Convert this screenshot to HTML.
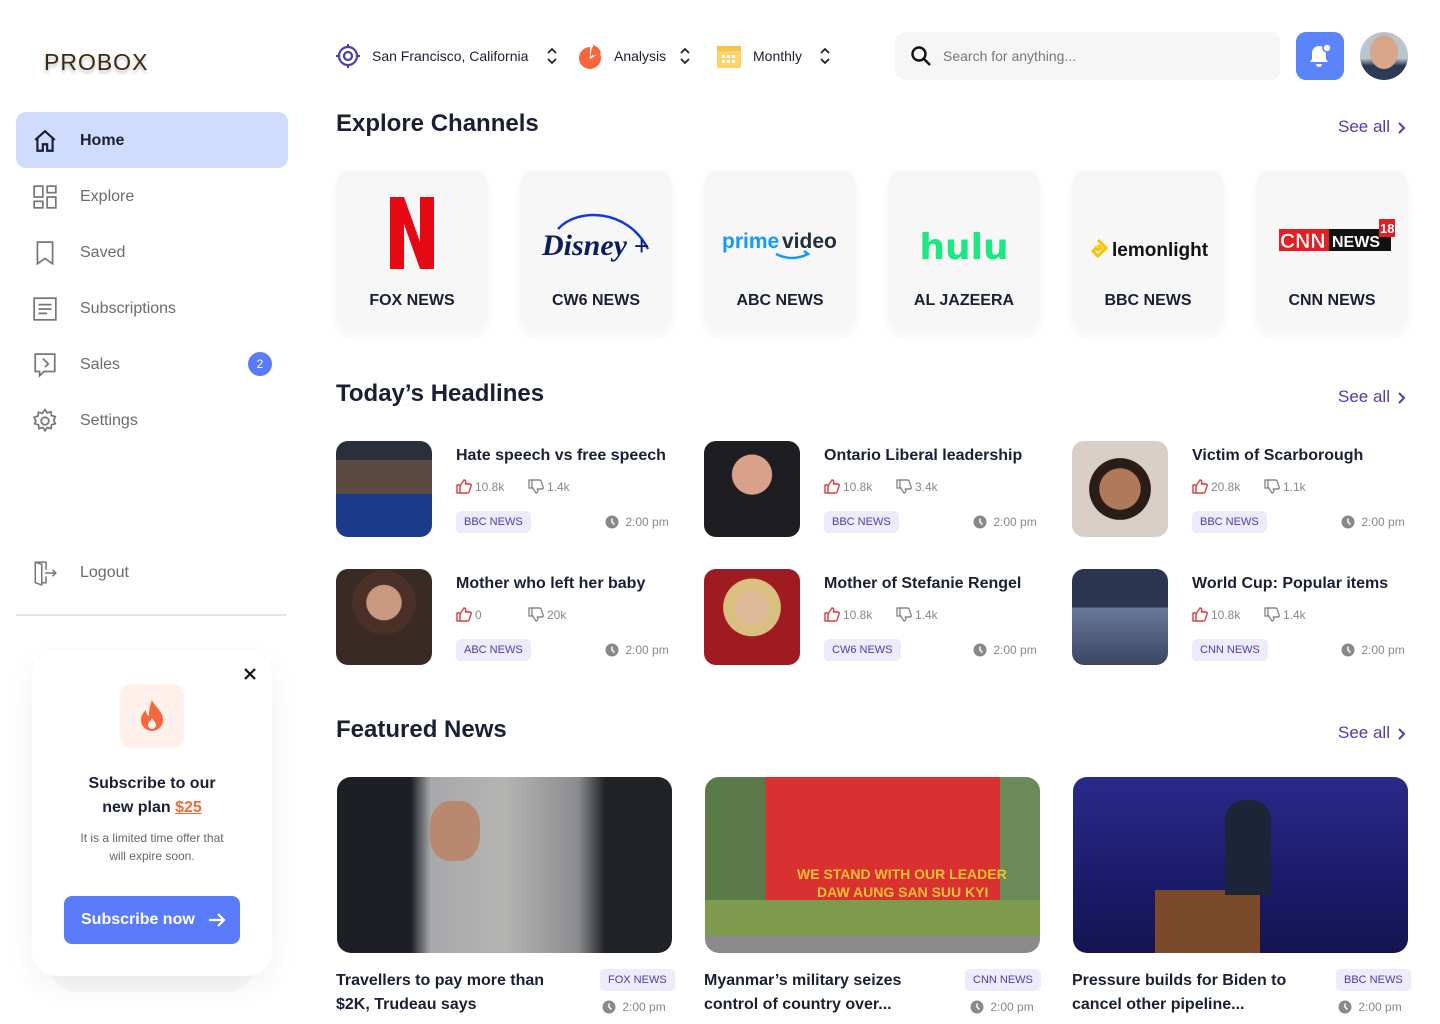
<!DOCTYPE html>
<html><head><meta charset="utf-8"><style>
*{box-sizing:border-box;margin:0;padding:0}
body{width:1440px;height:1024px;overflow:hidden;background:#fff;font-family:"Liberation Sans",sans-serif;color:#1b1f33;position:relative}
.abs{position:absolute}
.logo{left:44px;top:49px;font-size:23px;letter-spacing:1px;color:#3b2a12;text-shadow:0 3px 3px rgba(0,0,0,.25)}
.nav{left:16px;width:272px;height:56px;border-radius:10px;display:flex;align-items:center;padding-left:64px;font-size:16px;color:#6b6b6b;padding-top:2px}
.nav svg{position:absolute;left:16px;top:16px}
.nav.active{background:#cfdcfc;color:#1b1f33;font-weight:bold}
.badge{position:absolute;right:16px;top:16px;width:24px;height:24px;border-radius:50%;background:#5b7cfa;color:#fff;font-size:12px;text-align:center;line-height:24px}
.h2{font-size:24px;font-weight:bold;left:336px}
.see{left:1338px;font-size:17px;color:#4b3fa8}
.see svg{position:absolute;left:58px;top:4px}
.card{top:170px;width:152px;height:160px;border-radius:14px;background:#f7f7f7;box-shadow:0 6px 16px rgba(0,0,0,.04)}
.card .lbl{position:absolute;bottom:20px;width:100%;text-align:center;font-weight:bold;font-size:16px;color:#1b1f33}
.card .lg{position:absolute;top:28px;height:70px;width:100%;display:flex;align-items:center;justify-content:center}
.thumb{width:96px;height:96px;border-radius:12px}
.ht{font-size:16px;font-weight:bold;color:#1b1f33}
.st{font-size:12px;color:#888;display:flex;align-items:center;gap:3px}
.tag{background:#eeebfa;color:#4b3fa8;font-size:11px;padding:5px 8px;border-radius:5px}
.feat{top:777px;width:335px;height:176px;border-radius:14px}
.ft{font-size:16px;font-weight:bold;line-height:24px;top:969px;width:240px}
.ud{position:absolute}
</style></head><body>
<div class="abs logo">PROBOX</div>

<div class="abs nav active" style="top:112px"><svg width="26" height="26" viewBox="0 0 24 24" fill="none" stroke="#1b1f33" stroke-width="2"><path d="M3 11 12 3l9 8M5 9v12h5v-6h4v6h5V9"/></svg>Home</div>
<div class="abs nav" style="top:168px"><svg width="26" height="26" viewBox="0 0 24 24" fill="none" stroke="#777" stroke-width="1.6"><rect x="2" y="2" width="8" height="10"/><rect x="14" y="2" width="8" height="6"/><rect x="2" y="16" width="8" height="6"/><rect x="14" y="12" width="8" height="10"/></svg>Explore</div>
<div class="abs nav" style="top:224px"><svg width="26" height="26" viewBox="0 0 24 24" fill="none" stroke="#777" stroke-width="1.6"><path d="M5 2h14v20l-7-5-7 5z"/></svg>Saved</div>
<div class="abs nav" style="top:280px"><svg width="26" height="26" viewBox="0 0 24 24" fill="none" stroke="#777" stroke-width="1.6"><rect x="2" y="2" width="20" height="20"/><path d="M6 8h12M6 12h12M6 16h8"/></svg>Subscriptions</div>
<div class="abs nav" style="top:336px"><svg width="26" height="26" viewBox="0 0 24 24" fill="none" stroke="#777" stroke-width="1.6"><path d="M3 2h18v16H11l-4 4v-4H3z"/><path d="M10 6l5 5-3 3"/></svg>Sales<span class="badge">2</span></div>
<div class="abs nav" style="top:392px"><svg width="26" height="26" viewBox="0 0 24 24" fill="none" stroke="#777" stroke-width="1.6"><circle cx="12" cy="12" r="3.5"/><path d="M12 1.5l2 3 3.5-1 .5 3.5 3.5 1-1.5 3.3 1.5 3.2-3.5 1-.5 3.5-3.5-1-2 3-2-3-3.5 1-.5-3.5-3.5-1L3.5 12 2 8.5l3.5-1L6 4l3.5 1z"/></svg>Settings</div>
<div class="abs nav" style="top:544px"><svg width="26" height="26" viewBox="0 0 24 24" fill="none" stroke="#777" stroke-width="1.4"><path d="M3 2v19l6 2V4zM3 2h10v7M13 15v6H9M12 12h10M19 9l3 3-3 3"/></svg>Logout</div>
<div class="abs" style="left:16px;top:614px;width:271px;height:2px;background:#e6e6e6"></div>

<div class="abs" style="left:48px;top:680px;width:208px;height:312px;border-radius:30px;background:#f7f7f7"></div>
<div class="abs" style="left:32px;top:652px;width:240px;height:324px;border-radius:24px;background:#fff;box-shadow:0 8px 30px rgba(0,0,0,.06)"></div>
<svg class="abs" style="left:243px;top:667px" width="14" height="14" viewBox="0 0 14 14" stroke="#111" stroke-width="2.2"><path d="M2 2l10 10M12 2 2 12"/></svg>
<div class="abs" style="left:120px;top:684px;width:64px;height:64px;border-radius:10px;background:#fef0eb"><svg style="position:absolute;left:19px;top:15px" width="26" height="34" viewBox="0 0 26 34"><path d="M13 1c2 6 11 11 11 20a11 11 0 0 1-22 0c0-5 3-8 5-10 0 3 1 5 3 6 0-6 1-11 3-16z" fill="#f4683c"/><path d="M13 30a4 4 0 0 1-4-4c0-3 3-4 4-7 2 3 4 5 4 7a4 4 0 0 1-4 4z" fill="#fef0eb"/></svg></div>
<div class="abs" style="left:32px;width:240px;top:772px;text-align:center;font-weight:bold;font-size:16px;line-height:24px">Subscribe to our<br>new plan <span style="color:#f4683c;text-decoration:underline">$25</span></div>
<div class="abs" style="left:32px;width:240px;top:829px;text-align:center;font-size:12px;line-height:18px;color:#666">It is a limited time offer that<br>will expire soon.</div>
<div class="abs" style="left:64px;top:896px;width:176px;height:48px;border-radius:8px;background:#5b7cfa;color:#fff;font-weight:bold;font-size:16px;line-height:48px;padding-left:17px">Subscribe now <svg style="position:absolute;right:14px;top:16px" width="18" height="16" viewBox="0 0 18 16" fill="none" stroke="#fff" stroke-width="2.2"><path d="M1 8h15M10 2l6 6-6 6"/></svg></div>

<!-- top bar -->
<svg class="abs" style="left:336px;top:44px" width="24" height="24" viewBox="0 0 24 24" fill="none" stroke="#4b3fa8" stroke-width="2.2"><circle cx="12" cy="12" r="9"/><circle cx="12" cy="12" r="4"/><path d="M12 0v3M12 21v3M0 12h3M21 12h3"/></svg>
<div class="abs" style="left:372px;top:48px;font-size:14px">San Francisco, California</div>
<svg class="abs" style="left:546px;top:47px" width="12" height="18" viewBox="0 0 12 18" fill="none" stroke="#222" stroke-width="1.8"><path d="M2 6l4-4 4 4M2 12l4 4 4-4"/></svg>
<svg class="abs" style="left:578px;top:44px" width="26" height="26" viewBox="0 0 26 26"><circle cx="12" cy="14" r="11" fill="#f4683c"/><path d="M12 14 12 3 14 3z" fill="#fff"/><path d="M12 14l9-6" stroke="#fff" stroke-width="2"/><path d="M15 1a11 11 0 0 1 8 8l-8 3z" fill="#f4683c"/></svg>
<div class="abs" style="left:614px;top:48px;font-size:14px">Analysis</div>
<svg class="abs" style="left:679px;top:47px" width="12" height="18" viewBox="0 0 12 18" fill="none" stroke="#222" stroke-width="1.8"><path d="M2 6l4-4 4 4M2 12l4 4 4-4"/></svg>
<svg class="abs" style="left:716px;top:43px" width="26" height="26" viewBox="0 0 26 26"><rect x="1" y="3" width="24" height="22" rx="2" fill="#fcd46a"/><rect x="1" y="3" width="24" height="5" fill="#f7c34a"/><g fill="#fff"><rect x="6" y="12" width="3" height="3"/><rect x="11" y="12" width="3" height="3"/><rect x="16" y="12" width="3" height="3"/><rect x="6" y="17" width="3" height="3"/><rect x="11" y="17" width="3" height="3"/><rect x="16" y="17" width="3" height="3"/></g></svg>
<div class="abs" style="left:753px;top:48px;font-size:14px">Monthly</div>
<svg class="abs" style="left:819px;top:47px" width="12" height="18" viewBox="0 0 12 18" fill="none" stroke="#222" stroke-width="1.8"><path d="M2 6l4-4 4 4M2 12l4 4 4-4"/></svg>

<div class="abs" style="left:895px;top:32px;width:385px;height:48px;border-radius:10px;background:#f6f6f6"></div>
<svg class="abs" style="left:909px;top:44px" width="24" height="24" viewBox="0 0 24 24" fill="none" stroke="#111" stroke-width="2.4"><circle cx="10" cy="10" r="6.5"/><path d="M15 15l6 6"/></svg>
<div class="abs" style="left:943px;top:48px;font-size:14px;color:#777">Search for anything...</div>
<div class="abs" style="left:1296px;top:32px;width:48px;height:48px;border-radius:10px;background:#5b84fb"></div>
<svg class="abs" style="left:1306px;top:42px" width="28" height="28" viewBox="0 0 28 28" fill="#fff"><path d="M13 4a7 7 0 0 0-7 7v6l-2 3h18l-2-3v-6a7 7 0 0 0-7-7z"/><path d="M10 22a3 3 0 0 0 6 0z"/><circle cx="21" cy="6" r="4" stroke="#5b84fb" stroke-width="1.5"/></svg>
<div class="abs" style="left:1360px;top:32px;width:48px;height:48px;border-radius:50%;background:radial-gradient(ellipse 30% 36% at 50% 42%,#d9a588 0 95%,transparent 100%),linear-gradient(180deg,#b9c4cc 0 55%,#2c3a55 70%)"></div>

<!-- Explore channels -->
<div class="abs h2" style="top:110px">Explore Channels</div>
<div class="abs see" style="top:117px">See all<svg width="10" height="14" viewBox="0 0 10 14" fill="none" stroke="#4b3fa8" stroke-width="2"><path d="M3 2l5 5-5 5"/></svg></div>

<div class="abs card" style="left:336px"><div class="lg"><svg width="48" height="72" viewBox="0 0 48 72"><path d="M2 0h14l16 45V0h14v72H32L16 27v45H2z" fill="#e50914"/></svg></div><div class="lbl">FOX NEWS</div></div>
<div class="abs card" style="left:520px"><div class="lg" style="top:34px"><svg width="116" height="64" viewBox="0 0 116 64"><path d="M20 22c20-22 70-20 90 20" fill="none" stroke="#113ccf" stroke-width="2.5"/><text x="4" y="48" font-family="Liberation Serif" font-style="italic" font-weight="bold" font-size="30" fill="#0b1d5a">Disney</text><text x="96" y="48" font-size="26" fill="#0b1d5a">+</text></svg></div><div class="lbl">CW6 NEWS</div></div>
<div class="abs card" style="left:704px"><div class="lg" style="top:42px"><svg width="120" height="50" viewBox="0 0 120 50"><text x="2" y="26" font-family="Liberation Sans" font-weight="bold" font-size="21" fill="#1399ff">prime</text><text x="62" y="26" font-family="Liberation Sans" font-weight="bold" font-size="21" fill="#232f3e">video</text><path d="M56 32q16 8 32 0l-4-3" fill="none" stroke="#1399ff" stroke-width="2.5"/></svg></div><div class="lbl">ABC NEWS</div></div>
<div class="abs card" style="left:888px"><div class="lg" style="top:42px"><span style="font-weight:bold;font-size:36px;color:#1ce783;font-family:'DejaVu Sans',sans-serif">hulu</span></div><div class="lbl">AL JAZEERA</div></div>
<div class="abs card" style="left:1072px"><div class="lg" style="top:44px"><svg width="124" height="30" viewBox="0 0 124 30"><path d="M12 6l8 8-8 8-5-5 3-3 2 2 3-2-3-3" fill="none" stroke="#fcc300" stroke-width="3"/><text x="26" y="22" font-family="Liberation Sans" font-weight="bold" font-size="19" fill="#111">lemonlight</text></svg></div><div class="lbl">BBC NEWS</div></div>
<div class="abs card" style="left:1256px"><div class="lg" style="top:32px"><svg width="130" height="40" viewBox="0 0 130 40"><rect x="12" y="12" width="50" height="22" fill="#e31e24"/><text x="13" y="31" font-family="Liberation Sans" font-weight="bold" font-size="21" fill="#fff" stroke="#e31e24" stroke-width=".5">CNN</text><rect x="62" y="12" width="62" height="22" fill="#111"/><text x="65" y="30" font-family="Liberation Sans" font-weight="bold" font-size="16" fill="#fff">NEWS</text><rect x="112" y="2" width="16" height="18" fill="#e31e24"/><text x="113" y="16" font-family="Liberation Sans" font-weight="bold" font-size="13" fill="#fff">18</text></svg></div><div class="lbl">CNN NEWS</div></div>

<!-- headlines -->
<div class="abs h2" style="top:380px">Today’s Headlines</div>
<div class="abs see" style="top:387px">See all<svg width="10" height="14" viewBox="0 0 10 14" fill="none" stroke="#4b3fa8" stroke-width="2"><path d="M3 2l5 5-5 5"/></svg></div>

<div id="hl"></div>

<!-- featured -->
<div class="abs h2" style="top:716px">Featured News</div>
<div class="abs see" style="top:723px">See all<svg width="10" height="14" viewBox="0 0 10 14" fill="none" stroke="#4b3fa8" stroke-width="2"><path d="M3 2l5 5-5 5"/></svg></div>
<div class="abs feat" style="left:337px;background:linear-gradient(90deg,#1d1f24 0 22%,#a7a8aa 28%,#b5b4b2 50%,#8b8c8f 72%,#202325 80%);"></div>
<div class="abs" style="left:430px;top:801px;width:50px;height:60px;border-radius:40%;background:#b88870"></div>
<div class="abs feat" style="left:705px;background:linear-gradient(180deg,transparent 0 70%,#7d9a4d 70% 90%,#8a8a8a 90%),linear-gradient(90deg,#5a7a4a 0 18%,#d9312f 18% 88%,#6a8a5a 88%)"></div>
<div class="abs" style="left:797px;top:866px;color:#f4c232;font-weight:bold;font-size:14px">WE STAND WITH OUR LEADER</div>
<div class="abs" style="left:817px;top:884px;color:#f4c232;font-weight:bold;font-size:14px">DAW AUNG SAN SUU KYI</div>
<div class="abs feat" style="left:1073px;background:linear-gradient(180deg,#2a2a8a 0%,#1b1a6a 60%,#151550 100%)"></div>
<div class="abs" style="left:1155px;top:890px;width:105px;height:63px;background:#7a4a2a"></div>
<div class="abs" style="left:1225px;top:800px;width:46px;height:95px;border-radius:20px 20px 0 0;background:#1e2438"></div>

<div class="abs ft" style="left:336px">Travellers to pay more than $2K, Trudeau says</div>
<div class="abs tag" style="left:600px;top:969px">FOX NEWS</div>
<div class="abs st" style="left:602px;top:1000px" id="c1"></div>
<div class="abs ft" style="left:704px">Myanmar’s military seizes control of country over...</div>
<div class="abs tag" style="left:965px;top:969px">CNN NEWS</div>
<div class="abs st" style="left:970px;top:1000px" id="c2"></div>
<div class="abs ft" style="left:1072px">Pressure builds for Biden to cancel other pipeline...</div>
<div class="abs tag" style="left:1336px;top:969px">BBC NEWS</div>
<div class="abs st" style="left:1338px;top:1000px" id="c3"></div>

<script>
var clk='<svg width="14" height="14" viewBox="0 0 14 14"><circle cx="7" cy="7" r="6.5" fill="#8a8a8a"/><path d="M7 3.5V7l2.5 2.5" stroke="#fff" stroke-width="1.5" fill="none"/></svg>&nbsp;2:00 pm';
var up='<svg width="16" height="15" viewBox="0 0 16 15" fill="none" stroke="#e53935" stroke-width="1.4"><rect x="1" y="6" width="3" height="8"/><path d="M4 7l4-6c2 0 2 2 1.5 4H14c1 0 1.5 1 1 2l-2 6c0 1-1 1-2 1H4"/></svg>';
var dn='<svg width="16" height="15" viewBox="0 0 16 15" fill="none" stroke="#888" stroke-width="1.4"><rect x="1" y="1" width="3" height="8"/><path d="M4 8l4 6c2 0 2-2 1.5-4H14c1 0 1.5-1 1-2l-2-6c0-1-1-1-2-1H4"/></svg>';
["c1","c2","c3"].forEach(function(i){document.getElementById(i).innerHTML=clk});
var d=[
[336,441,"Hate speech vs free speech","10.8k","1.4k","BBC NEWS","linear-gradient(180deg,#2b2f3c 0 20%,#5a4a40 20% 55%,#1a3a8a 55%)"],
[704,441,"Ontario Liberal leadership","10.8k","3.4k","BBC NEWS","radial-gradient(circle at 50% 35%,#d9a08a 0 25%,#1d1d22 26%)"],
[1072,441,"Victim of Scarborough","20.8k","1.1k","BBC NEWS","radial-gradient(circle at 50% 50%,#b07a5a 0 30%,#2a1d18 31% 45%,#d8d0c8 46%)"],
[336,569,"Mother who left her baby","0","20k","ABC NEWS","radial-gradient(circle at 50% 35%,#c89880 0 22%,#4a3028 23% 40%,#3a2a25 41%)"],
[704,569,"Mother of Stefanie Rengel","10.8k","1.4k","CW6 NEWS","radial-gradient(circle at 50% 40%,#e0b89a 0 22%,#d8c080 23% 38%,#a01a22 39%)"],
[1072,569,"World Cup: Popular items","10.8k","1.4k","CNN NEWS","linear-gradient(180deg,#2a3550 0 40%,#6a7a9a 40%,#3a4560)"]];
var h="";d.forEach(function(r){var x=r[0],y=r[1];
h+='<div class="abs thumb" style="left:'+x+'px;top:'+y+'px;background:'+r[6]+'"></div>';
h+='<div class="abs ht" style="left:'+(x+120)+'px;top:'+(y+6)+'px">'+r[2]+'</div>';
h+='<div class="abs st" style="left:'+(x+120)+'px;top:'+(y+38)+'px">'+up+r[3]+'</div>';
h+='<div class="abs st" style="left:'+(x+192)+'px;top:'+(y+38)+'px">'+dn+r[4]+'</div>';
h+='<div class="abs tag" style="left:'+(x+120)+'px;top:'+(y+70)+'px">'+r[5]+'</div>';
h+='<div class="abs st" style="left:'+(x+269)+'px;top:'+(y+74)+'px">'+clk+'</div>';});
document.getElementById("hl").innerHTML=h;
</script>
</body></html>
